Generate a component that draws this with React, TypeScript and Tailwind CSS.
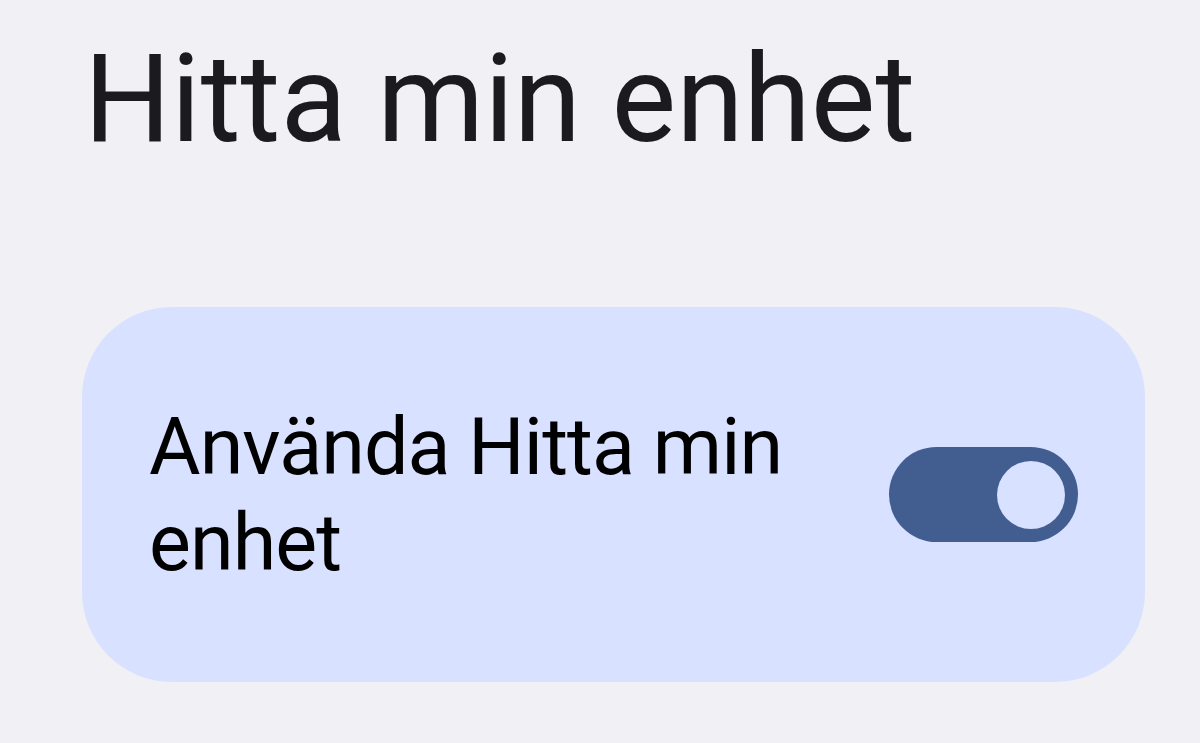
export default function App() {
  return (
    <div className="w-[1200px] h-[743px] overflow-hidden bg-[#f1f0f4] flex flex-col" style={{ fontFamily: 'Roboto, "Noto Sans", sans-serif' }}>
      <h1 className="ml-[84px] mt-[30px] text-[122px] leading-[140px] text-[#1b1b1f] font-normal tracking-[0px]">Hitta min enhet</h1>
      <div className="ml-[82px] mt-[137px] w-[1063px] h-[375px] rounded-[90px] bg-[#d8e1ff] flex items-center pl-[67px] pr-[67px]">
        <div className="w-[660px] text-[79px] leading-[96px] text-black tracking-[-0.9px]">Använda Hitta min enhet</div>
        <div className="ml-auto w-[189px] h-[95px] rounded-full bg-[#425e91] flex items-center justify-end pr-[13px]">
          <div className="w-[68px] h-[68px] rounded-full bg-[#d8e1ff]" />
        </div>
      </div>
    </div>
  );
}
